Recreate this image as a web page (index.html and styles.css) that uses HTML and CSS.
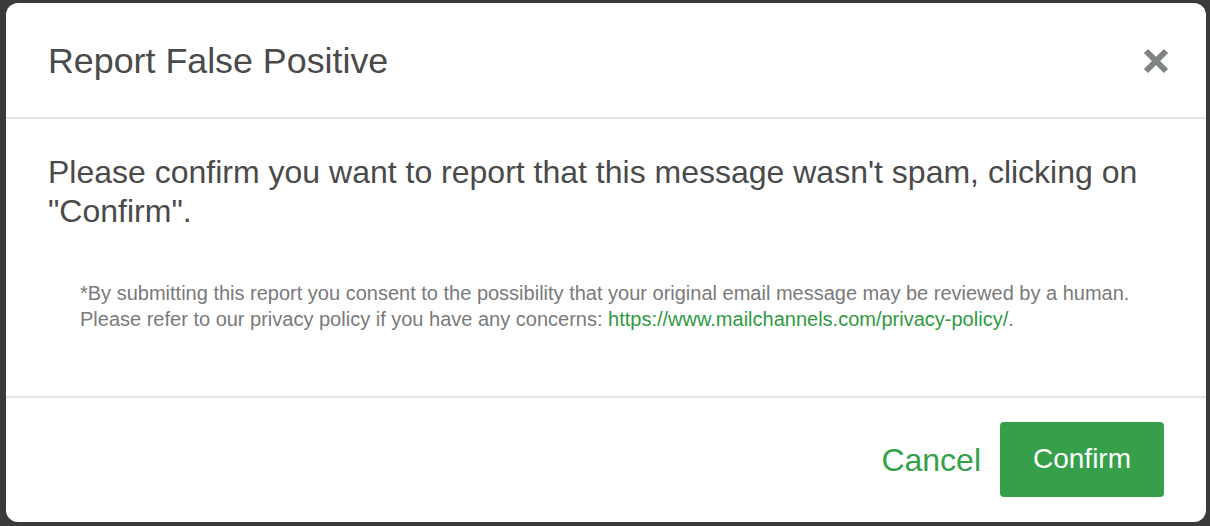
FILE: index.html
```html
<!DOCTYPE html>
<html>
<head>
    <title>Report False Positive</title>
    <link rel="stylesheet" href="styles.css">
</head>
<body>
    <div class="modal">
        <div class="modal-header">
            <h3 class="modal-title">Report False Positive</h3>
            <button class="close" aria-label="Close">
                <svg width="26" height="26" viewBox="0 0 26 26">
                    <path d="M3 3 L23 23 M23 3 L3 23" stroke="#7e8480" stroke-width="6" stroke-linecap="butt"/>
                </svg>
            </button>
        </div>
        <div class="modal-body">
            <p class="lead">Please confirm you want to report that this message wasn't spam, clicking on "Confirm".</p>
            <p class="note">*By submitting this report you consent to the possibility that your original email message may be reviewed by a human.<br>
            Please refer to our privacy policy if you have any concerns: <a href="#">https://www.mailchannels.com/privacy-policy/</a>.</p>
        </div>
        <div class="modal-footer">
            <a href="#" class="btn-link">Cancel</a>
            <button class="btn-confirm">Confirm</button>
        </div>
    </div>
</body>
</html>
```

FILE: styles.css
```css
html, body { height: 100%; }
body { margin: 0; padding: 3px 4px 4px 6px; box-sizing: border-box; background: #3a3a3a; font-family: "Liberation Sans", Arial, sans-serif; }
.modal { background: #fff; border-radius: 12px; height: 100%; display: flex; flex-direction: column; }
.modal-header { display: flex; align-items: center; justify-content: space-between; height: 116px; padding: 2px 37px 0 42px; border-bottom: 2px solid #e5e5e5; box-sizing: border-box; }
.modal-title { margin: 0; font-size: 35.8px; font-weight: normal; color: #4a4a4a; }
.close { border: 0; background: none; padding: 0; cursor: pointer; display: flex; }
.modal-body { padding: 34px 42px 0 42px; height: 279px; box-sizing: border-box; border-bottom: 2px solid #e5e5e5; }
.lead { margin: 0; font-size: 32px; line-height: 39px; color: #4a4a4a; }
.note { margin: 49px 0 0 32px; font-size: 20px; line-height: 26px; color: #7a7a7a; }
.note a { color: #2f9a43; text-decoration: none; }
.modal-footer { flex: 1; display: flex; align-items: center; justify-content: flex-end; gap: 19px; padding-right: 42px; }
.btn-link { color: #35a04a; font-size: 32px; text-decoration: none; }
.btn-confirm { width: 164px; height: 75px; margin-top: -2px; border: 0; border-radius: 4px; background: #35a049; color: #fff; font-family: "Liberation Sans", Arial, sans-serif; font-size: 28px; cursor: pointer; }
```
